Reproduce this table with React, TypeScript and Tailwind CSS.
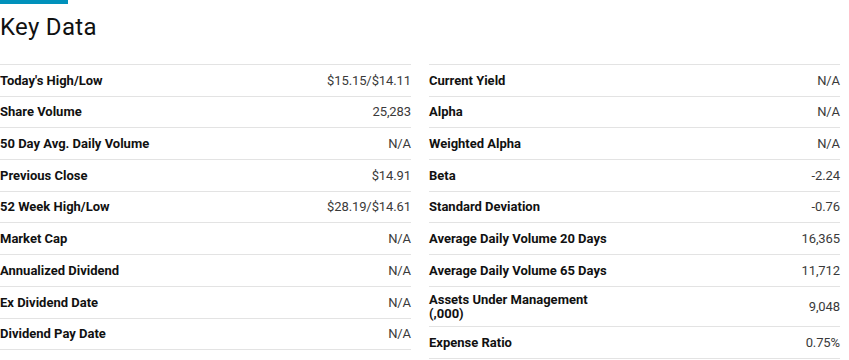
import React from 'react';

type Row = { label: string; value: string };

const left: Row[] = [
  { label: "Today's High/Low", value: '$15.15/$14.11' },
  { label: 'Share Volume', value: '25,283' },
  { label: '50 Day Avg. Daily Volume', value: 'N/A' },
  { label: 'Previous Close', value: '$14.91' },
  { label: '52 Week High/Low', value: '$28.19/$14.61' },
  { label: 'Market Cap', value: 'N/A' },
  { label: 'Annualized Dividend', value: 'N/A' },
  { label: 'Ex Dividend Date', value: 'N/A' },
  { label: 'Dividend Pay Date', value: 'N/A' },
];

const right: Row[] = [
  { label: 'Current Yield', value: 'N/A' },
  { label: 'Alpha', value: 'N/A' },
  { label: 'Weighted Alpha', value: 'N/A' },
  { label: 'Beta', value: '-2.24' },
  { label: 'Standard Deviation', value: '-0.76' },
  { label: 'Average Daily Volume 20 Days', value: '16,365' },
  { label: 'Average Daily Volume 65 Days', value: '11,712' },
  { label: 'Assets Under Management (,000)', value: '9,048' },
  { label: 'Expense Ratio', value: '0.75%' },
];

const DataTable = ({ rows }: { rows: Row[] }) => (
  <div className="border-t border-[#e3e3e3]">
    {rows.map((r) => (
      <div
        key={r.label}
        className="flex items-center justify-between gap-4 min-h-[31.7px] py-[6.5px] border-b border-[#e3e3e3] box-border"
      >
        <span className="font-bold text-[13px] leading-[13.3px] text-[#111] max-w-[186px]">{r.label}</span>
        <span className="text-[13px] leading-[13.3px] text-[#3a3a3a] tracking-[-0.1px]">{r.value}</span>
      </div>
    ))}
  </div>
);

export default function App() {
  return (
    <div className="w-[840px] bg-white font-['Roboto',sans-serif]">
      <div className="w-[68px] h-[4px] bg-[#0091bb]" />
      <h2 className="text-[24px] leading-[28px] font-normal tracking-[0.3px] text-[#111] mt-[9px] mb-[23px]">Key Data</h2>
      <div className="grid grid-cols-2 gap-x-[18px]">
        <DataTable rows={left} />
        <DataTable rows={right} />
      </div>
    </div>
  );
}
